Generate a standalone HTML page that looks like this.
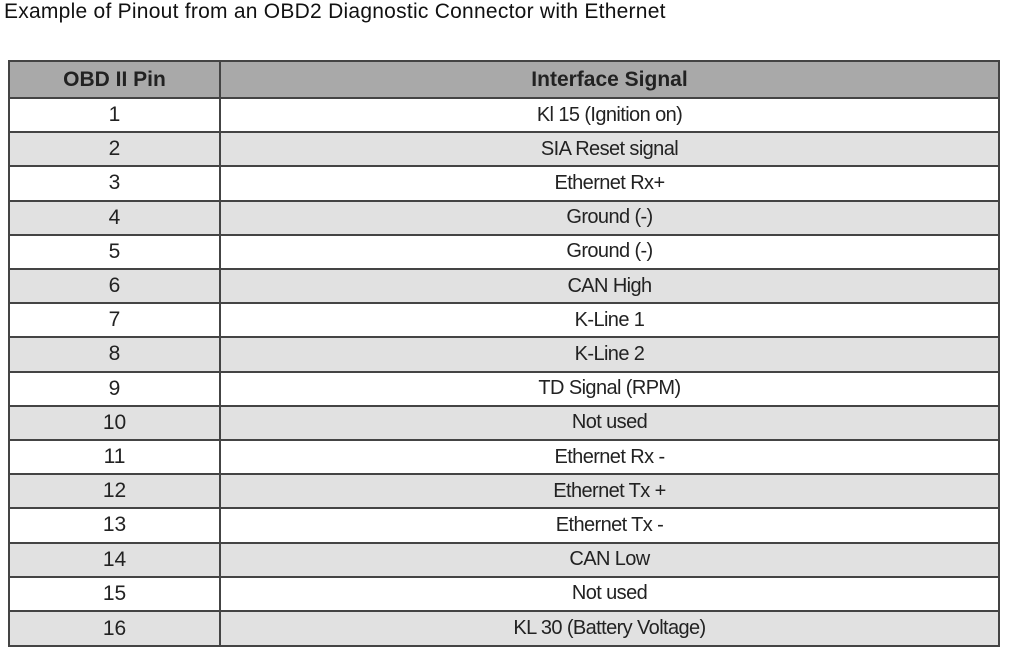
<!DOCTYPE html>
<html><head><style>
html,body{margin:0;padding:0;background:#fff;width:1011px;height:651px;overflow:hidden;font-family:"Liberation Sans",sans-serif;}
.title{position:absolute;left:4px;top:0px;font-size:21px;color:#111;letter-spacing:0.25px;}
.t{position:absolute;left:8px;top:60px;width:992px;height:587px;border:2px solid #444;box-sizing:border-box;overflow:hidden;}
.r{position:absolute;left:0;width:988px;height:34.2px;border-top:2px solid #444;box-sizing:border-box;font-size:20px;color:#222;}
.r div{position:absolute;top:0;height:100%;display:flex;align-items:center;justify-content:center;}
.a{left:0;width:209px;font-size:21px;}
.b{left:209px;width:779px;border-left:2px solid #444;box-sizing:border-box;letter-spacing:-0.6px;}
.g{background:#e1e1e1;}
.h{background:#a9a9a9;font-weight:bold;font-size:21px;border-top:none;}
</style></head><body>
<div class="title">Example of Pinout from an OBD2 Diagnostic Connector with Ethernet</div>
<div class="t">
<div class="r h" style="top:0;height:35px"><div class="a">OBD II Pin</div><div class="b" style="letter-spacing:0">Interface Signal</div></div>
<div class="r" style="top:35px"><div class="a">1</div><div class="b">Kl 15 (Ignition on)</div></div>
<div class="r g" style="top:69.2px"><div class="a">2</div><div class="b">SIA Reset signal</div></div>
<div class="r" style="top:103.4px"><div class="a">3</div><div class="b">Ethernet Rx+</div></div>
<div class="r g" style="top:137.6px"><div class="a">4</div><div class="b">Ground (-)</div></div>
<div class="r" style="top:171.8px"><div class="a">5</div><div class="b">Ground (-)</div></div>
<div class="r g" style="top:206px"><div class="a">6</div><div class="b">CAN High</div></div>
<div class="r" style="top:240.2px"><div class="a">7</div><div class="b">K-Line 1</div></div>
<div class="r g" style="top:274.4px"><div class="a">8</div><div class="b">K-Line 2</div></div>
<div class="r" style="top:308.6px"><div class="a">9</div><div class="b">TD Signal (RPM)</div></div>
<div class="r g" style="top:342.8px"><div class="a">10</div><div class="b">Not used</div></div>
<div class="r" style="top:377px"><div class="a">11</div><div class="b">Ethernet Rx -</div></div>
<div class="r g" style="top:411.2px"><div class="a">12</div><div class="b">Ethernet Tx +</div></div>
<div class="r" style="top:445.4px"><div class="a">13</div><div class="b">Ethernet Tx -</div></div>
<div class="r g" style="top:479.6px"><div class="a">14</div><div class="b">CAN Low</div></div>
<div class="r" style="top:513.8px"><div class="a">15</div><div class="b">Not used</div></div>
<div class="r g" style="top:548px;height:35px"><div class="a">16</div><div class="b">KL 30 (Battery Voltage)</div></div>
</div>
</body></html>
